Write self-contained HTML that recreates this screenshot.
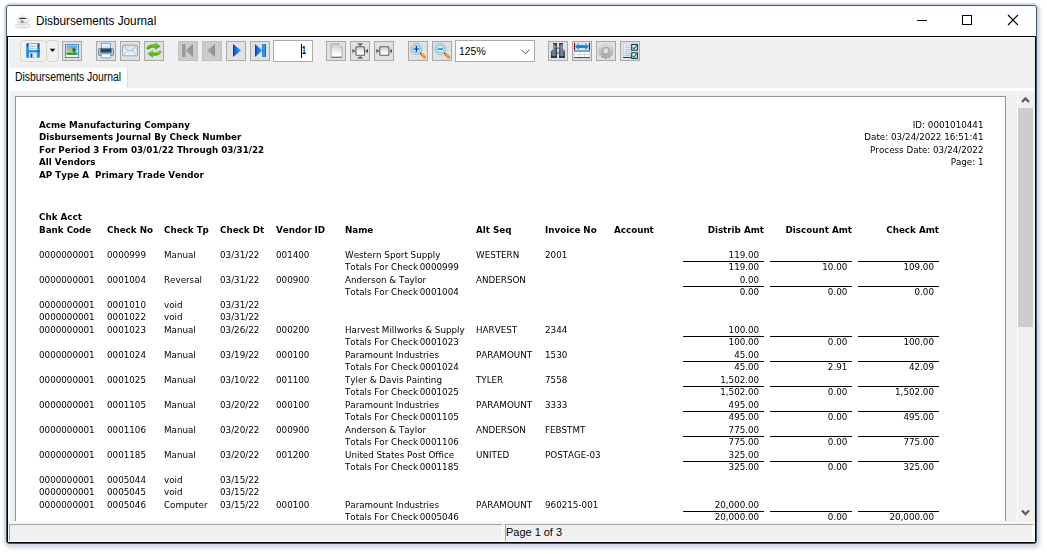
<!DOCTYPE html>
<html><head><meta charset="utf-8"><title>Disbursements Journal</title>
<style>
html,body{margin:0;padding:0;background:#fff;}
body{width:1047px;height:554px;position:relative;overflow:hidden;font-family:"Liberation Sans",sans-serif;}
.abs{position:absolute;}
#halo{position:absolute;left:4px;top:3px;width:1035px;height:543px;border-radius:6px;background:#ccdbee;box-shadow:1px 2px 4px rgba(0,0,0,.17);}
#win{position:absolute;left:6px;top:5px;width:1031px;height:539px;border-radius:4px;background:#505458;}
#inner{position:absolute;left:7px;top:36px;width:1029px;height:507px;background:#000;border-radius:0 0 2px 2px;}
#title{position:absolute;left:7px;top:6px;width:1029px;height:30px;background:#fff;border-radius:2px 2px 0 0;}
#ttext{position:absolute;left:35.8px;top:12.7px;font-size:12.2px;line-height:16px;color:#000;white-space:nowrap;transform-origin:0 0;transform:scaleX(.965);}
#client{position:absolute;left:8px;top:37px;width:1025px;height:503px;background:#f0f0f0;border:solid #fff;border-width:1px 0 1px 2px;}
.tb{position:absolute;top:41px;width:18px;height:18px;border:1px solid #a9a9a9;background:#e1e1e1;}
.tb.dis{background:#cccccc;border-color:#bfbfbf;}
.t{position:absolute;font-family:"DejaVu Sans",sans-serif;font-size:8.75px;line-height:12px;white-space:nowrap;color:#000;font-kerning:none;font-variant-ligatures:none;}
.t.b{font-weight:bold;}
.t.r{width:200px;text-align:right;}
.ln{position:absolute;height:1px;background:#000;}
</style></head><body>
<div id="halo"></div>
<div id="win"></div>
<div id="inner"></div>
<div id="title"></div>
<div id="ttext">Disbursements Journal</div>
<!--ICON-->
<div class="abs" style="left:917px;top:20px;width:10px;height:1px;background:#000"></div>
<div class="abs" style="left:962px;top:15px;width:8px;height:8px;border:1px solid #000"></div>
<svg class="abs" style="left:1007px;top:14px" width="12" height="12" viewBox="0 0 12 12"><path d="M1 1L11 11M11 1L1 11" stroke="#000" stroke-width="1.1" fill="none"/></svg>
<div id="client"></div>
<div class="abs" style="left:9px;top:38px;width:1px;height:29.5px;background:#f0f0f0"></div>
<svg class="abs" style="left:14px;top:11px" width="18" height="19" viewBox="14 11 18 19">
<defs><linearGradient id="gcup" x1="0" y1="0" x2="0" y2="1"><stop offset="0" stop-color="#fafafa"/><stop offset="1" stop-color="#dedede"/></linearGradient></defs>
<path d="M20.600 16.400c-.5-1 .5-1.500 0-2.900M22.800 16.400c-.6-1.200 .6-2 0-3.500M25 16.400c-.5-1 .5-1.500 0-2.900" stroke="#e6e6e6" stroke-width=".7" fill="none"/>
<ellipse cx="22.800" cy="25.700" rx="7.700" ry="2.300" fill="#f3f3f3" stroke="#c6c6c6" stroke-width=".7"/>
<path d="M27.100 19.300c2.800-.9 3.800 1.900 -.2 3.500" stroke="#cfcfcf" stroke-width="1" fill="none"/>
<path d="M17.300 18.100c0 3.400 .9 6 2.900 7.200h4.200c2-1.200 2.900-3.800 2.900-7.200z" fill="url(#gcup)" stroke="#d0d0d0" stroke-width=".5"/>
<ellipse cx="22.300" cy="18.100" rx="5" ry="1.200" fill="#f6f6f6" stroke="#d2d2d2" stroke-width=".5"/>
<ellipse cx="22.600" cy="18.400" rx="3.800" ry=".6" fill="#4a2a12"/>
<path d="M20.200 21.400c.5-1 1.500-1.300 2.400-.8 1 .3 2 1.300 2.700 2.500-1.300-.5-2.300-.6-3.300-.2-.9.100-1.700-.5-1.800-1.500z" fill="#6b9fca"/>
</svg>
<!-- save split button -->
<div class="abs" style="left:20px;top:40px;width:24.5px;height:20px;border:1px solid #d6d6c8;border-radius:4px"></div>
<div class="abs" style="left:46px;top:40px;width:11px;height:20px;border:1px solid #d6d6c8;border-radius:4px"></div>
<svg class="abs" style="left:26px;top:43px" width="14" height="15" viewBox="0 0 14 15">
<defs><linearGradient id="gfl" x1="0" y1="0" x2="1" y2="0"><stop offset="0" stop-color="#1c86ee"/><stop offset=".5" stop-color="#2f9cff"/><stop offset="1" stop-color="#1c7ee0"/></linearGradient></defs>
<rect x=".3" y=".3" width="13.400" height="14.400" rx="1.200" fill="url(#gfl)" stroke="#3a9af8" stroke-width=".6"/>
<rect x="2.800" y=".8" width="8.400" height="6.200" fill="#f4f6f8"/>
<path d="M3.600 3.200h6.800" stroke="#8a96a2" stroke-width="1" stroke-dasharray="1.600 .7"/><path d="M3.600 5.300h6.800" stroke="#9aa6b2" stroke-width=".9" stroke-dasharray="1.300 .6"/>
<rect x="1" y="1" width="1" height="2.600" fill="#0a3a9a"/><rect x="12" y="1" width="1" height="2.600" fill="#0a3a9a"/>
<rect x="12.600" y="7.700" width="1.200" height="1.200" fill="#0a2a6a"/>
<rect x="3" y="9.500" width="8" height="5.200" fill="#dfe9f5"/>
<rect x="4.600" y="10.500" width="1.800" height="4" fill="#1a3a8a"/>
</svg>
<svg class="abs" style="left:49px;top:48px" width="8" height="5" viewBox="0 0 8 5"><path d="M.7 .8h5.600L3.500 4z" fill="#000"/></svg>
<!-- image -->
<div class="tb" style="left:62px"></div>
<svg class="abs" style="left:65px;top:44px" width="14" height="14" viewBox="0 0 14 14">
<defs><linearGradient id="gsky" x1="0" y1="0" x2="0" y2="1"><stop offset="0" stop-color="#3c9cf0"/><stop offset="1" stop-color="#a8dcf8"/></linearGradient>
<linearGradient id="ggr" x1="0" y1="0" x2="0" y2="1"><stop offset="0" stop-color="#58c038"/><stop offset="1" stop-color="#1a7a10"/></linearGradient></defs>
<rect x=".5" y=".5" width="13" height="13" fill="#fff" stroke="#5588cc"/>
<rect x="1.500" y="1.500" width="11" height="7" fill="url(#gsky)"/>
<rect x="1.500" y="8.200" width="11" height="2.600" fill="url(#ggr)"/>
<circle cx="4.300" cy="4" r="1.500" fill="#ffa010"/>
<circle cx="9" cy="5.800" r="1.900" fill="#2a7a20"/><rect x="8.600" y="7" width=".9" height="2" fill="#6a4a2a"/>
</svg>
<!-- print -->
<div class="tb" style="left:96px"></div>
<svg class="abs" style="left:98px;top:42px" width="16" height="17" viewBox="0 0 16 17">
<defs><linearGradient id="gpp" x1="0" y1="0" x2="0" y2="1"><stop offset="0" stop-color="#ffffff"/><stop offset="1" stop-color="#c8d4e0"/></linearGradient></defs>
<rect x=".5" y="6.500" width="15" height="7" rx="1" fill="#b4c0cc" stroke="#6a7c92" stroke-width=".8"/>
<rect x="3.400" y="1.300" width="9.200" height="5.600" fill="url(#gpp)" stroke="#5a90d8" stroke-width=".8"/>
<rect x="2.500" y="6.600" width="11" height="3.600" fill="#2e4560"/>
<rect x="2.500" y="10.200" width="11" height="1" fill="#56708c"/>
<rect x="3.400" y="11.800" width="9.200" height="4" rx=".6" fill="#f6fafe" stroke="#5a90d8" stroke-width=".8"/>
</svg>
<!-- mail -->
<div class="tb" style="left:120px"></div>
<svg class="abs" style="left:122px;top:44px" width="16" height="13" viewBox="0 0 16 13">
<defs><linearGradient id="gml" x1="0" y1="0" x2="0" y2="1"><stop offset="0" stop-color="#d4e2ec"/><stop offset="1" stop-color="#f2f7fa"/></linearGradient></defs>
<rect x=".6" y="1.200" width="14.800" height="10.600" rx=".8" fill="url(#gml)" stroke="#8fa4b6" stroke-width="1"/>
<path d="M1.800 2.400L6 6.300c1 .8 3 .8 4 0L14.200 2.400M1.800 10.800L5.600 6.500M14.200 10.800L10.400 6.500" stroke="#8aa6ba" stroke-width=".7" fill="none"/>
</svg>
<!-- refresh -->
<div class="tb" style="left:144px"></div>
<svg class="abs" style="left:146px;top:42px" width="16" height="17" viewBox="0 0 16 17">
<defs><linearGradient id="ggn" x1="0" y1="0" x2="0" y2="1"><stop offset="0" stop-color="#8ee020"/><stop offset="1" stop-color="#3a9a08"/></linearGradient></defs>
<path d="M.6 6.600C1.400 3.200 5 2 9.400 2.800V.8L14.200 4.300 9.400 7.600V5.600C6.400 5 3.400 5.600 2.400 7.600z" fill="url(#ggn)" stroke="#3c9010" stroke-width=".4"/>
<path d="M15.400 9.400C14.600 12.800 11 14 6.600 13.200V15.200L1.800 11.700 6.600 8.400V10.400C9.600 11 12.600 10.400 13.600 8.400z" fill="url(#ggn)" stroke="#3c9010" stroke-width=".4"/>
</svg>
<!-- nav -->
<div class="tb dis" style="left:178px"></div>
<svg class="abs" style="left:181px;top:43px" width="14" height="15" viewBox="0 0 14 15"><defs><linearGradient id="ggy" x1="0" y1="0" x2="1" y2="0"><stop offset="0" stop-color="#a8a8a8"/><stop offset="1" stop-color="#8e8e8e"/></linearGradient></defs><rect x="1" y="1" width="3.500" height="13" fill="#999"/><path d="M4.500 7.500L12 1V14z" fill="url(#ggy)"/></svg>
<div class="tb dis" style="left:202px"></div>
<svg class="abs" style="left:205px;top:43px" width="14" height="15" viewBox="0 0 14 15"><path d="M2.200 7.500L10 1V14z" fill="url(#ggy)"/></svg>
<div class="tb" style="left:226px"></div>
<svg class="abs" style="left:229px;top:43px" width="14" height="15" viewBox="0 0 14 15"><defs><linearGradient id="gbl" x1="0" y1="0" x2="1" y2="0"><stop offset="0" stop-color="#0a3cb0"/><stop offset=".5" stop-color="#1c80ee"/><stop offset="1" stop-color="#3aa8ff"/></linearGradient></defs><path d="M4 1L12.200 7.500 4 14z" fill="url(#gbl)"/></svg>
<div class="tb" style="left:250px"></div>
<svg class="abs" style="left:253px;top:43px" width="14" height="15" viewBox="0 0 14 15"><defs><linearGradient id="gbl2" x1="0" y1="0" x2="1" y2="0"><stop offset="0" stop-color="#1060d0"/><stop offset=".5" stop-color="#30b0ff"/><stop offset="1" stop-color="#0a3cb0"/></linearGradient></defs><path d="M2 1L9.400 7.500 2 14z" fill="url(#gbl)"/><rect x="9.200" y="1" width="3.700" height="13" fill="url(#gbl2)"/></svg>
<!-- page field -->
<div class="abs" style="left:273px;top:40px;width:38px;height:20px;border:1px solid #ababab;background:#fff"></div>
<div class="abs" style="left:301px;top:44px;width:1px;height:14px;background:#000"></div>
<div class="abs" id="pgnum" style="left:302.3px;top:42.8px;font-size:11.500px;line-height:15px;color:#000;font-weight:bold;transform-origin:0 0;transform:scaleX(.6)">1</div>
<!-- page buttons -->
<div class="tb" style="left:326px"></div>
<svg class="abs" style="left:330px;top:43px" width="13" height="15" viewBox="0 0 13 15"><defs><linearGradient id="gpg" x1="0" y1="0" x2="0" y2="1"><stop offset="0" stop-color="#cdcdcd"/><stop offset=".8" stop-color="#ffffff"/></linearGradient></defs><path d="M1.600 1H8.800L12 4.200V13.600c0 .4-.3.600-.6.600H1.600c-.4 0-.6-.3-.6-.6V1.600c0-.4.300-.6.600-.6z" fill="url(#gpg)" stroke="#9a9ea4" stroke-width=".9"/><path d="M1.300 14.300h10.400" stroke="#5a6068" stroke-width="1"/><path d="M8.800 1V4.200H12z" fill="#ffffff" stroke="#a8a8a8" stroke-width=".6"/></svg>
<div class="tb" style="left:350px"></div>
<svg class="abs" style="left:352px;top:42px" width="16" height="17" viewBox="0 0 16 17"><rect x="3.900" y="4.700" width="8.600" height="8.600" rx="1" fill="url(#gpg)" stroke="#5e5e5e" stroke-width="1.100"/><path d="M.4 6.700L3.300 9 .4 11.300zM16 6.700L13.100 9 16 11.300zM5.800 1.800L8.200 4.100 10.600 1.800zM5.800 16.200L8.200 13.900 10.600 16.200z" fill="#585858"/><path d="M5.400 1.700h5.600M5.400 16.300h5.600" stroke="#6a6a6a" stroke-width=".8"/></svg>
<div class="tb" style="left:374px"></div>
<svg class="abs" style="left:376px;top:42px" width="16" height="17" viewBox="0 0 16 17"><rect x="3.700" y="4.700" width="9.200" height="8.600" rx="1" fill="url(#gpg)" stroke="#5e5e5e" stroke-width="1.100"/><path d="M.3 6.700L3.100 9 .3 11.300zM16.200 6.700L13.500 9 16.200 11.300z" fill="#585858"/></svg>
<!-- zoom -->
<div class="tb" style="left:408px"></div>
<svg class="abs" style="left:410px;top:43px" width="17" height="17" viewBox="0 0 17 17"><path d="M9.600 9.400L11.600 11.300" stroke="#506070" stroke-width="1.800"/><path d="M11.900 11.700L14.700 14.200" stroke="#f08810" stroke-width="3" stroke-linecap="round"/><path d="M12.300 11.300L14.800 13.500" stroke="#ffc050" stroke-width=".8" stroke-linecap="round"/><defs><radialGradient id="ggl" cx=".5" cy=".6" r=".6"><stop offset="0" stop-color="#eefaff"/><stop offset="1" stop-color="#a4dcf4"/></radialGradient></defs><circle cx="6.400" cy="6" r="4.900" fill="url(#ggl)" stroke="#f4f6f8" stroke-width="1.100"/><circle cx="6.400" cy="6" r="5.500" fill="none" stroke="#7c8894" stroke-width=".55"/><circle cx="6.400" cy="6" r="4" fill="none" stroke="#5cc4e6" stroke-width=".9"/><path d="M3.600 6h5.600" stroke="#3c80d4" stroke-width="1.700"/><path d="M6.400 3.100v5.800" stroke="#0a34a0" stroke-width="1.400"/></svg>
<div class="tb" style="left:432px"></div>
<svg class="abs" style="left:434px;top:43px" width="17" height="17" viewBox="0 0 17 17"><path d="M9.600 9.400L11.600 11.300" stroke="#506070" stroke-width="1.800"/><path d="M11.900 11.700L14.700 14.200" stroke="#f08810" stroke-width="3" stroke-linecap="round"/><path d="M12.300 11.300L14.800 13.500" stroke="#ffc050" stroke-width=".8" stroke-linecap="round"/><circle cx="6.400" cy="6" r="4.900" fill="url(#ggl)" stroke="#f4f6f8" stroke-width="1.100"/><circle cx="6.400" cy="6" r="5.500" fill="none" stroke="#7c8894" stroke-width=".55"/><circle cx="6.400" cy="6" r="4" fill="none" stroke="#5cc4e6" stroke-width=".9"/><path d="M3.800 6h5.200" stroke="#4a84d0" stroke-width="1.700"/></svg>
<!-- combo -->
<div class="abs" style="left:455px;top:40px;width:78px;height:20px;border:1px solid #ababab;background:#fff"></div>
<div class="abs" id="zoomtxt" style="left:458.8px;top:42.7px;font-size:11.6px;line-height:15px;color:#000;white-space:nowrap;transform-origin:0 0;transform:scaleX(.9)">125%</div>
<svg class="abs" style="left:520px;top:48px" width="11" height="8" viewBox="0 0 11 8"><path d="M1.300 1.700L5.400 5.800 9.500 1.700" stroke="#444" stroke-width="1" fill="none"/></svg>
<!-- find -->
<div class="tb" style="left:548px"></div>
<svg class="abs" style="left:550px;top:42px" width="16" height="17" viewBox="0 0 16 17"><defs><linearGradient id="gbn" x1="0" y1="0" x2="1" y2="0"><stop offset="0" stop-color="#2e3c4a"/><stop offset=".45" stop-color="#8494a2"/><stop offset="1" stop-color="#2a3846"/></linearGradient></defs>
<path d="M3.100 1.100H7V15.800H1V9.400L3.100 7z" fill="url(#gbn)"/><path d="M9.100 1.100H13V7L14.900 9.400V15.800H9.100z" fill="url(#gbn)"/><rect x="7" y="5.400" width="2.100" height="1.400" fill="#66747f"/><rect x="7" y="10.400" width="2.100" height="1.400" fill="#66747f"/><rect x="3.100" y="1.100" width="3.900" height="1.200" fill="#2a3644"/><rect x="9.100" y="1.100" width="3.900" height="1.200" fill="#2a3644"/><rect x="3.100" y="4.600" width="3.900" height=".8" fill="#a0acb8" opacity=".7"/><rect x="9.100" y="4.600" width="3.900" height=".8" fill="#a0acb8" opacity=".7"/><rect x="1" y="14.300" width="6" height="1.500" fill="#16222e"/><rect x="9.100" y="14.300" width="5.800" height="1.500" fill="#16222e"/></svg>
<!-- width table -->
<div class="tb" style="left:572px"></div>
<svg class="abs" style="left:573px;top:42px" width="18" height="17" viewBox="0 0 18 17"><defs><linearGradient id="gar" x1="0" y1="0" x2="0" y2="1"><stop offset="0" stop-color="#38c4ff"/><stop offset=".55" stop-color="#0a84d4"/><stop offset="1" stop-color="#1aa0e8"/></linearGradient></defs><rect x="1" y=".9" width="1.100" height="7.200" fill="#8c0404"/><rect x="15.900" y=".9" width="1.100" height="7.200" fill="#8c0404"/><path d="M2.200 4.500L5.800 .9V3H12.200V.9L15.800 4.500 12.200 8.100V6H5.800V8.100z" fill="url(#gar)"/><rect x="1.200" y="9" width="15.600" height="6.600" fill="#ffffff" stroke="#b4c2d6" stroke-width=".6"/><rect x="1" y="8.200" width="16" height="1.700" fill="#6a98da"/><path d="M6.400 10v5.500M11.600 10v5.500M1.200 12.600h15.600" stroke="#c4cede" stroke-width=".8"/><rect x="1.100" y="15.200" width="15.800" height=".9" fill="#2a3a4c"/></svg>
<!-- gear -->
<div class="tb" style="left:596px"></div>
<svg class="abs" style="left:598px;top:43px" width="16" height="16" viewBox="0 0 16 16"><defs><linearGradient id="ggr2" gradientUnits="userSpaceOnUse" x1="0" y1="-7.700" x2="0" y2="7.700"><stop offset="0" stop-color="#dedede"/><stop offset=".45" stop-color="#c6c6c6"/><stop offset="1" stop-color="#a0a0a0"/></linearGradient></defs><g transform="translate(7.900 7.900)"><path d="M-1.25 -5.87L-0.97 -7.64L0.97 -7.64L1.25 -5.87L1.85 -5.71L2.98 -7.10L4.66 -6.13L4.01 -4.46L4.46 -4.01L6.13 -4.66L7.10 -2.98L5.71 -1.85L5.87 -1.25L7.64 -0.97L7.64 0.97L5.87 1.25L5.71 1.85L7.10 2.98L6.13 4.66L4.46 4.01L4.01 4.46L4.66 6.13L2.98 7.10L1.85 5.71L1.25 5.87L0.97 7.64L-0.97 7.64L-1.25 5.87L-1.85 5.71L-2.98 7.10L-4.66 6.13L-4.01 4.46L-4.46 4.01L-6.13 4.66L-7.10 2.98L-5.71 1.85L-5.87 1.25L-7.64 0.97L-7.64 -0.97L-5.87 -1.25L-5.71 -1.85L-7.10 -2.98L-6.13 -4.66L-4.46 -4.01L-4.01 -4.46L-4.66 -6.13L-2.98 -7.10L-1.85 -5.71z" fill="url(#ggr2)" stroke="url(#ggr2)" stroke-width=".8" stroke-linejoin="round"/><circle r="3.500" fill="none" stroke="#a8a8a8" stroke-width="1.500"/><circle r="2.300" fill="#dedede"/></g></svg>
<!-- checklist -->
<div class="tb" style="left:620px"></div>
<svg class="abs" style="left:622px;top:42px" width="17" height="17" viewBox="0 0 17 17"><defs><linearGradient id="gck" x1="0" y1="0" x2="0" y2="1"><stop offset="0" stop-color="#f6f9ff"/><stop offset="1" stop-color="#d6e2f6"/></linearGradient></defs><rect x="1.300" y="1.300" width="10.400" height="14.300" fill="url(#gck)" stroke="#b4c8ea" stroke-width=".6"/><path d="M3 3.400h7M3 5.400h7M3 7.500h7M3 9.400h7M3 11.500h7M3 13.500h7" stroke="#a4b8de" stroke-width=".8"/><rect x="1.200" y="15" width="8.500" height="1" fill="#2a3c5c"/><rect x="9.700" y="2.500" width="5.700" height="5.700" fill="#eef4fe" stroke="#0c3a78" stroke-width="1.100"/><rect x="9.700" y="10.800" width="5.700" height="5.700" fill="#eef4fe" stroke="#0c3a78" stroke-width="1.100"/><path d="M10.700 5.400L12.100 7 14.800 3.200M10.700 13.700L12.100 15.300 14.800 11.500" stroke="#12a012" stroke-width="1.300" fill="none"/></svg>

<!-- tab -->
<div class="abs" style="left:8px;top:67.5px;width:119px;height:23px;background:#fff;border-right:1px solid #dedede"></div>
<div class="abs" style="left:8px;top:88px;width:1025.5px;height:2.7px;background:#fff"></div>
<div class="abs" id="tabtext" style="left:14.8px;top:69.3px;font-size:12px;line-height:16px;white-space:nowrap;color:#000;transform-origin:0 0;transform:scaleX(.865)">Disbursements Journal</div>
<!-- report panel -->
<div class="abs" style="left:15px;top:96px;width:989px;height:424px;background:#fff;border:1px solid #949494;border-bottom:none"></div>
<div id="rep" style="position:absolute;left:0;top:0;width:1047px;height:554px;will-change:transform">
<div class="t b" style="left:39px;top:119px">Acme Manufacturing Company</div>
<div class="t b" style="left:39px;top:131px">Disbursements Journal By Check Number</div>
<div class="t b" style="left:39px;top:144px">For Period 3 From 03/01/22 Through 03/31/22</div>
<div class="t b" style="left:39px;top:156px">All Vendors</div>
<div class="t b" style="left:39px;top:169px">AP Type A  Primary Trade Vendor</div>
<div class="t r " style="left:783.5px;top:119px">ID: 0001010441</div>
<div class="t r " style="left:783.5px;top:131px">Date: 03/24/2022 16:51:41</div>
<div class="t r " style="left:783.5px;top:144px">Process Date: 03/24/2022</div>
<div class="t r " style="left:783.5px;top:156px">Page: 1</div>
<div class="t b" style="left:39px;top:211px">Chk Acct</div>
<div class="t b" style="left:39px;top:224px">Bank Code</div>
<div class="t b" style="left:107px;top:224px">Check No</div>
<div class="t b" style="left:164px;top:224px">Check Tp</div>
<div class="t b" style="left:220px;top:224px">Check Dt</div>
<div class="t b" style="left:276px;top:224px">Vendor ID</div>
<div class="t b" style="left:345px;top:224px">Name</div>
<div class="t b" style="left:476px;top:224px">Alt Seq</div>
<div class="t b" style="left:545px;top:224px">Invoice No</div>
<div class="t b" style="left:614px;top:224px">Account</div>
<div class="t r b" style="left:564px;top:224px">Distrib Amt</div>
<div class="t r b" style="left:652px;top:224px">Discount Amt</div>
<div class="t r b" style="left:739px;top:224px">Check Amt</div>
<div class="t " style="left:39px;top:249px">0000000001</div>
<div class="t " style="left:107px;top:249px">0000999</div>
<div class="t " style="left:164px;top:249px">Manual</div>
<div class="t " style="left:220px;top:249px">03/31/22</div>
<div class="t " style="left:276px;top:249px">001400</div>
<div class="t " style="left:345px;top:249px">Western Sport Supply</div>
<div class="t " style="left:476px;top:249px">WESTERN</div>
<div class="t " style="left:545px;top:249px">2001</div>
<div class="t r " style="left:559.2px;top:249px">119.00</div>
<div class="ln" style="left:682.5px;top:261px;width:81px"></div><div class="ln" style="left:769.5px;top:261px;width:82px"></div><div class="ln" style="left:857.5px;top:261px;width:81.5px"></div>
<div class="t " style="left:345px;top:261px">Totals For Check</div>
<div class="t " style="left:419.8px;top:261px">0000999</div>
<div class="t r " style="left:559.2px;top:261px">119.00</div>
<div class="t r " style="left:647.3px;top:261px">10.00</div>
<div class="t r " style="left:734px;top:261px">109.00</div>
<div class="t " style="left:39px;top:274px">0000000001</div>
<div class="t " style="left:107px;top:274px">0001004</div>
<div class="t " style="left:164px;top:274px">Reversal</div>
<div class="t " style="left:220px;top:274px">03/31/22</div>
<div class="t " style="left:276px;top:274px">000900</div>
<div class="t " style="left:345px;top:274px">Anderson &amp; Taylor</div>
<div class="t " style="left:476px;top:274px">ANDERSON</div>
<div class="t " style="left:545px;top:274px"></div>
<div class="t r " style="left:559.2px;top:274px">0.00</div>
<div class="ln" style="left:682.5px;top:286px;width:81px"></div><div class="ln" style="left:769.5px;top:286px;width:82px"></div><div class="ln" style="left:857.5px;top:286px;width:81.5px"></div>
<div class="t " style="left:345px;top:286px">Totals For Check</div>
<div class="t " style="left:419.8px;top:286px">0001004</div>
<div class="t r " style="left:559.2px;top:286px">0.00</div>
<div class="t r " style="left:647.3px;top:286px">0.00</div>
<div class="t r " style="left:734px;top:286px">0.00</div>
<div class="t " style="left:39px;top:299px">0000000001</div>
<div class="t " style="left:107px;top:299px">0001010</div>
<div class="t " style="left:164px;top:299px">void</div>
<div class="t " style="left:220px;top:299px">03/31/22</div>
<div class="t " style="left:39px;top:311px">0000000001</div>
<div class="t " style="left:107px;top:311px">0001022</div>
<div class="t " style="left:164px;top:311px">void</div>
<div class="t " style="left:220px;top:311px">03/31/22</div>
<div class="t " style="left:39px;top:324px">0000000001</div>
<div class="t " style="left:107px;top:324px">0001023</div>
<div class="t " style="left:164px;top:324px">Manual</div>
<div class="t " style="left:220px;top:324px">03/26/22</div>
<div class="t " style="left:276px;top:324px">000200</div>
<div class="t " style="left:345px;top:324px">Harvest Millworks &amp; Supply</div>
<div class="t " style="left:476px;top:324px">HARVEST</div>
<div class="t " style="left:545px;top:324px">2344</div>
<div class="t r " style="left:559.2px;top:324px">100.00</div>
<div class="ln" style="left:682.5px;top:336px;width:81px"></div><div class="ln" style="left:769.5px;top:336px;width:82px"></div><div class="ln" style="left:857.5px;top:336px;width:81.5px"></div>
<div class="t " style="left:345px;top:336px">Totals For Check</div>
<div class="t " style="left:419.8px;top:336px">0001023</div>
<div class="t r " style="left:559.2px;top:336px">100.00</div>
<div class="t r " style="left:647.3px;top:336px">0.00</div>
<div class="t r " style="left:734px;top:336px">100.00</div>
<div class="t " style="left:39px;top:349px">0000000001</div>
<div class="t " style="left:107px;top:349px">0001024</div>
<div class="t " style="left:164px;top:349px">Manual</div>
<div class="t " style="left:220px;top:349px">03/19/22</div>
<div class="t " style="left:276px;top:349px">000100</div>
<div class="t " style="left:345px;top:349px">Paramount Industries</div>
<div class="t " style="left:476px;top:349px">PARAMOUNT</div>
<div class="t " style="left:545px;top:349px">1530</div>
<div class="t r " style="left:559.2px;top:349px">45.00</div>
<div class="ln" style="left:682.5px;top:361px;width:81px"></div><div class="ln" style="left:769.5px;top:361px;width:82px"></div><div class="ln" style="left:857.5px;top:361px;width:81.5px"></div>
<div class="t " style="left:345px;top:361px">Totals For Check</div>
<div class="t " style="left:419.8px;top:361px">0001024</div>
<div class="t r " style="left:559.2px;top:361px">45.00</div>
<div class="t r " style="left:647.3px;top:361px">2.91</div>
<div class="t r " style="left:734px;top:361px">42.09</div>
<div class="t " style="left:39px;top:374px">0000000001</div>
<div class="t " style="left:107px;top:374px">0001025</div>
<div class="t " style="left:164px;top:374px">Manual</div>
<div class="t " style="left:220px;top:374px">03/10/22</div>
<div class="t " style="left:276px;top:374px">001100</div>
<div class="t " style="left:345px;top:374px">Tyler &amp; Davis Painting</div>
<div class="t " style="left:476px;top:374px">TYLER</div>
<div class="t " style="left:545px;top:374px">7558</div>
<div class="t r " style="left:559.2px;top:374px">1,502.00</div>
<div class="ln" style="left:682.5px;top:386px;width:81px"></div><div class="ln" style="left:769.5px;top:386px;width:82px"></div><div class="ln" style="left:857.5px;top:386px;width:81.5px"></div>
<div class="t " style="left:345px;top:386px">Totals For Check</div>
<div class="t " style="left:419.8px;top:386px">0001025</div>
<div class="t r " style="left:559.2px;top:386px">1,502.00</div>
<div class="t r " style="left:647.3px;top:386px">0.00</div>
<div class="t r " style="left:734px;top:386px">1,502.00</div>
<div class="t " style="left:39px;top:399px">0000000001</div>
<div class="t " style="left:107px;top:399px">0001105</div>
<div class="t " style="left:164px;top:399px">Manual</div>
<div class="t " style="left:220px;top:399px">03/20/22</div>
<div class="t " style="left:276px;top:399px">000100</div>
<div class="t " style="left:345px;top:399px">Paramount Industries</div>
<div class="t " style="left:476px;top:399px">PARAMOUNT</div>
<div class="t " style="left:545px;top:399px">3333</div>
<div class="t r " style="left:559.2px;top:399px">495.00</div>
<div class="ln" style="left:682.5px;top:411px;width:81px"></div><div class="ln" style="left:769.5px;top:411px;width:82px"></div><div class="ln" style="left:857.5px;top:411px;width:81.5px"></div>
<div class="t " style="left:345px;top:411px">Totals For Check</div>
<div class="t " style="left:419.8px;top:411px">0001105</div>
<div class="t r " style="left:559.2px;top:411px">495.00</div>
<div class="t r " style="left:647.3px;top:411px">0.00</div>
<div class="t r " style="left:734px;top:411px">495.00</div>
<div class="t " style="left:39px;top:424px">0000000001</div>
<div class="t " style="left:107px;top:424px">0001106</div>
<div class="t " style="left:164px;top:424px">Manual</div>
<div class="t " style="left:220px;top:424px">03/20/22</div>
<div class="t " style="left:276px;top:424px">000900</div>
<div class="t " style="left:345px;top:424px">Anderson &amp; Taylor</div>
<div class="t " style="left:476px;top:424px">ANDERSON</div>
<div class="t " style="left:545px;top:424px">FEBSTMT</div>
<div class="t r " style="left:559.2px;top:424px">775.00</div>
<div class="ln" style="left:682.5px;top:436px;width:81px"></div><div class="ln" style="left:769.5px;top:436px;width:82px"></div><div class="ln" style="left:857.5px;top:436px;width:81.5px"></div>
<div class="t " style="left:345px;top:436px">Totals For Check</div>
<div class="t " style="left:419.8px;top:436px">0001106</div>
<div class="t r " style="left:559.2px;top:436px">775.00</div>
<div class="t r " style="left:647.3px;top:436px">0.00</div>
<div class="t r " style="left:734px;top:436px">775.00</div>
<div class="t " style="left:39px;top:449px">0000000001</div>
<div class="t " style="left:107px;top:449px">0001185</div>
<div class="t " style="left:164px;top:449px">Manual</div>
<div class="t " style="left:220px;top:449px">03/20/22</div>
<div class="t " style="left:276px;top:449px">001200</div>
<div class="t " style="left:345px;top:449px">United States Post Office</div>
<div class="t " style="left:476px;top:449px">UNITED</div>
<div class="t " style="left:545px;top:449px">POSTAGE-03</div>
<div class="t r " style="left:559.2px;top:449px">325.00</div>
<div class="ln" style="left:682.5px;top:461px;width:81px"></div><div class="ln" style="left:769.5px;top:461px;width:82px"></div><div class="ln" style="left:857.5px;top:461px;width:81.5px"></div>
<div class="t " style="left:345px;top:461px">Totals For Check</div>
<div class="t " style="left:419.8px;top:461px">0001185</div>
<div class="t r " style="left:559.2px;top:461px">325.00</div>
<div class="t r " style="left:647.3px;top:461px">0.00</div>
<div class="t r " style="left:734px;top:461px">325.00</div>
<div class="t " style="left:39px;top:474px">0000000001</div>
<div class="t " style="left:107px;top:474px">0005044</div>
<div class="t " style="left:164px;top:474px">void</div>
<div class="t " style="left:220px;top:474px">03/15/22</div>
<div class="t " style="left:39px;top:486px">0000000001</div>
<div class="t " style="left:107px;top:486px">0005045</div>
<div class="t " style="left:164px;top:486px">void</div>
<div class="t " style="left:220px;top:486px">03/15/22</div>
<div class="t " style="left:39px;top:499px">0000000001</div>
<div class="t " style="left:107px;top:499px">0005046</div>
<div class="t " style="left:164px;top:499px">Computer</div>
<div class="t " style="left:220px;top:499px">03/15/22</div>
<div class="t " style="left:276px;top:499px">000100</div>
<div class="t " style="left:345px;top:499px">Paramount Industries</div>
<div class="t " style="left:476px;top:499px">PARAMOUNT</div>
<div class="t " style="left:545px;top:499px">960215-001</div>
<div class="t r " style="left:559.2px;top:499px">20,000.00</div>
<div class="ln" style="left:682.5px;top:511px;width:81px"></div><div class="ln" style="left:769.5px;top:511px;width:82px"></div><div class="ln" style="left:857.5px;top:511px;width:81.5px"></div>
<div class="t " style="left:345px;top:511px">Totals For Check</div>
<div class="t " style="left:419.8px;top:511px">0005046</div>
<div class="t r " style="left:559.2px;top:511px">20,000.00</div>
<div class="t r " style="left:647.3px;top:511px">0.00</div>
<div class="t r " style="left:734px;top:511px">20,000.00</div>
</div>
<!-- scrollbar -->
<div class="abs" style="left:1017px;top:91px;width:1px;height:430px;background:#fff"></div>
<div class="abs" style="left:1018px;top:91px;width:15px;height:430px;background:#f0f0f0"></div>
<div class="abs" style="left:1018px;top:108px;width:15px;height:219px;background:#cdcdcd"></div>
<svg class="abs" style="left:1020px;top:95px" width="11" height="9" viewBox="0 0 11 9"><path d="M2 7L5.500 3.400L9 7" stroke="#5a5a5a" stroke-width="2.200" fill="none"/></svg>
<svg class="abs" style="left:1020px;top:508px" width="11" height="9" viewBox="0 0 11 9"><path d="M2 2.600L5.500 6.200L9 2.600" stroke="#5a5a5a" stroke-width="2.200" fill="none"/></svg>
<!-- status bar -->
<div class="abs" style="left:8px;top:521px;width:1027px;height:3px;background:#f6f6f6"></div>
<div class="abs" style="left:9px;top:524px;width:494px;height:17px;background:#f0f0f0;border-top:1px solid #a6a696;border-left:1px solid #a6a696;border-right:1px solid #fff;box-sizing:border-box"></div>
<div class="abs" style="left:505px;top:524px;width:530px;height:17px;background:#f0f0f0;border-top:1px solid #a6a696;border-left:1px solid #a6a696;border-right:3px solid #fff;box-sizing:border-box"></div>
<div class="abs" id="sttext" style="left:506.2px;top:524.4px;font-size:11.6px;line-height:15px;white-space:nowrap;color:#000;transform-origin:0 0;transform:scaleX(.945)">Page 1 of 3</div>
</body></html>
